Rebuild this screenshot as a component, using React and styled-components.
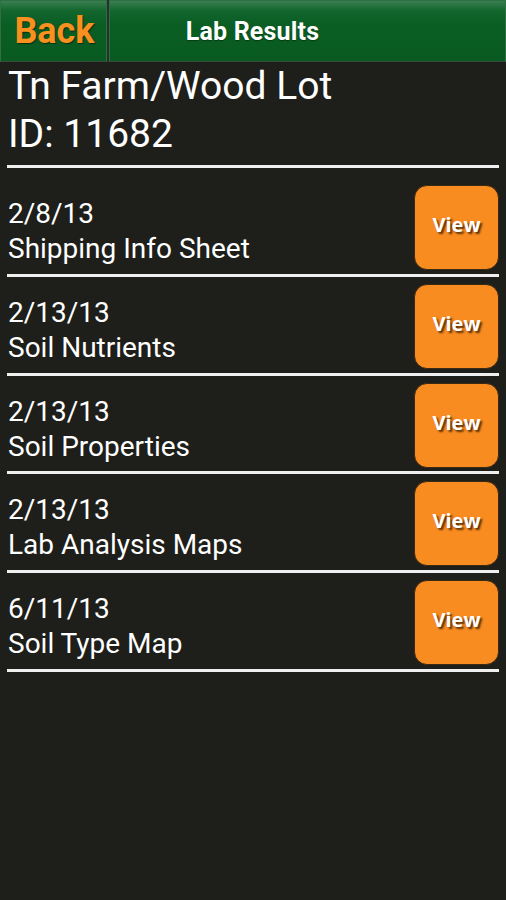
import React from "react";
import styled, { createGlobalStyle } from "styled-components";

const GlobalStyle = createGlobalStyle`
  html, body {
    margin: 0;
    padding: 0;
    background: #1e1e1a;
  }
  body {
    font-family: Roboto, "Noto Sans", sans-serif;
    color: #fff;
  }
`;

const Screen = styled.div`
  width: 506px;
  min-height: 900px;
  background: #1e1e1a;
`;

const Header = styled.header`
  display: flex;
  gap: 2px;
  height: 62px;
  background: #2b2f2b;
`;

const HeaderCell = styled.div`
  display: flex;
  align-items: center;
  justify-content: center;
  box-sizing: border-box;
  width: ${(p) => (p.$width ? `${p.$width}px` : "auto")};
  flex: ${(p) => (p.$width ? "none" : "1")};
  padding-right: ${(p) => p.$padRight || 0}px;
  border: 1px solid #2f6f43;
  border-bottom-color: #3b4a3f;
  background: linear-gradient(#3a7f50 0, #12652c 10px, #0a5d23 40%, #085a20 100%);
`;

const BackText = styled.span`
  font-family: Roboto, sans-serif;
  font-weight: 700;
  font-size: 36px;
  color: #f7901e;
  text-shadow: 1px 1px 1px rgba(0, 0, 0, 0.5);
  margin-left: 2px;
`;

const TitleText = styled.span`
  font-family: Roboto, sans-serif;
  font-weight: 700;
  font-size: 25px;
  letter-spacing: 0.2px;
  color: #fff;
  text-shadow: 0 1px 1px rgba(0, 0, 0, 0.35);
`;

const Content = styled.main`
  padding: 0 7px;
`;

const Farm = styled.section`
  font-size: 39px;
  line-height: 48px;
  padding-left: 1px;
  padding-bottom: 7px;
  border-bottom: 3px solid #efefef;
  margin-bottom: 10px;
`;

const List = styled.ul`
  list-style: none;
  margin: 0;
  padding: 0;
`;

const Row = styled.li`
  display: flex;
  justify-content: space-between;
  align-items: flex-start;
  height: 95.75px;
  border-bottom: 3px solid #efefef;
`;

const RowText = styled.div`
  padding: 18px 0 0 1px;
  font-size: 28px;
  line-height: 35px;
`;

const ViewButton = styled.button`
  margin-top: 7px;
  width: 85px;
  height: 85px;
  box-sizing: border-box;
  border: 1px solid #3a2a12;
  border-radius: 13px;
  background: #f98c21;
  color: #fff;
  font-family: "Open Sans", sans-serif;
  font-weight: 700;
  font-size: 20px;
  text-shadow: 2px 2px 2px rgba(60, 30, 0, 0.85);
  padding: 0 0 6px;
  cursor: pointer;
`;

const results = [
  { date: "2/8/13", name: "Shipping Info Sheet" },
  { date: "2/13/13", name: "Soil Nutrients" },
  { date: "2/13/13", name: "Soil Properties" },
  { date: "2/13/13", name: "Lab Analysis Maps" },
  { date: "6/11/13", name: "Soil Type Map" },
];

export default function App() {
  return (
    <Screen>
      <GlobalStyle />
      <Header>
        <HeaderCell $width={107}>
          <BackText>Back</BackText>
        </HeaderCell>
        <HeaderCell $padRight={110}>
          <TitleText>Lab Results</TitleText>
        </HeaderCell>
      </Header>
      <Content>
        <Farm>
          <div>Tn Farm/Wood Lot</div>
          <div>ID: 11682</div>
        </Farm>
        <List>
          {results.map((r, i) => (
            <Row key={i}>
              <RowText>
                <div>{r.date}</div>
                <div>{r.name}</div>
              </RowText>
              <ViewButton>View</ViewButton>
            </Row>
          ))}
        </List>
      </Content>
    </Screen>
  );
}
